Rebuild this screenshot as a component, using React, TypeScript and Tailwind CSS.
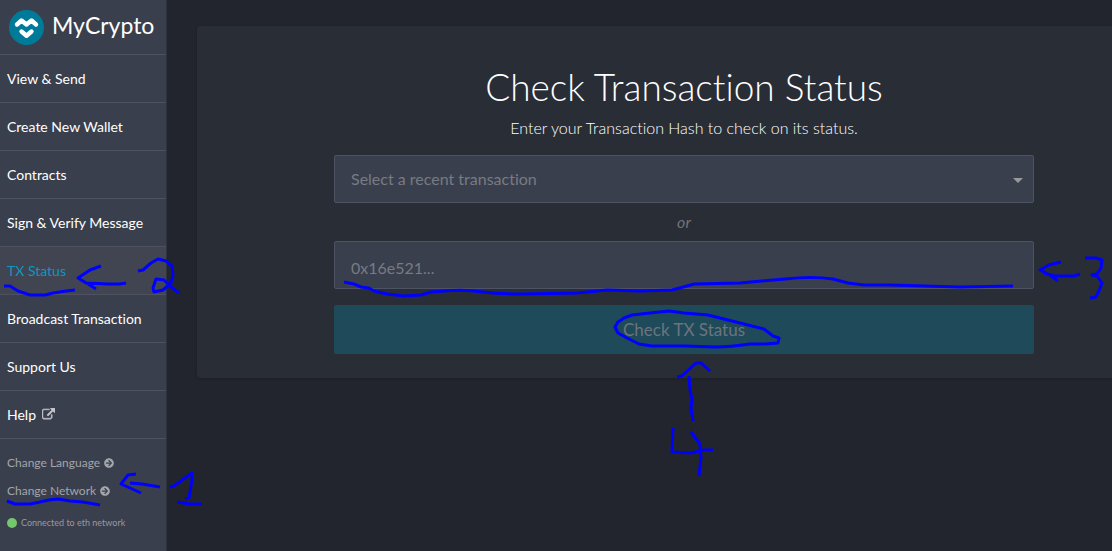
import { FaArrowCircleRight } from "react-icons/fa";

const links = [
  "View & Send",
  "Create New Wallet",
  "Contracts",
  "Sign & Verify Message",
  "TX Status",
  "Broadcast Transaction",
  "Support Us",
  "Help",
];

function Logo() {
  return (
    <svg viewBox="0 0 35 35" className="size-[35px] shrink-0" aria-hidden="true">
      <circle cx="17.5" cy="17.5" r="17.5" fill="#007a99" />
      <g fill="none" stroke="#fff" strokeLinecap="round" strokeLinejoin="round" strokeWidth="4.400">
        <path d="M8 14.500 L12.500 10.500 L17.500 14.500 L22.500 10.500 L27 14.500" />
        <path d="M12.500 21.500 L17.500 25.700 L22.500 21.500" />
      </g>
    </svg>
  );
}

function ExternalIcon() {
  return (
    <svg
      viewBox="0 0 1792 1792"
      className="size-[13px] text-[#c4c6ca]"
      fill="currentColor"
      stroke="currentColor"
      strokeWidth="70"
      aria-hidden="true"
    >
      <path d="M1408 928v320q0 119-84.500 203.500T1120 1536H288q-119 0-203.500-84.500T0 1248V416q0-119 84.500-203.500T288 128h704q14 0 23 9t9 23v64q0 14-9 23t-23 9H288q-66 0-113 47t-47 113v832q0 66 47 113t113 47h832q66 0 113-47t47-113V928q0-14 9-23t23-9h64q14 0 23 9t9 23zm384-864v512q0 26-19 45t-45 19-45-19l-176-176-652 652q-10 10-23 10t-23-10L695 983q-10-10-10-23t10-23l652-652-176-176q-19-19-19-45t19-45 45-19h512q26 0 45 19t19 45z" />
    </svg>
  );
}

function Sidebar() {
  return (
    <aside className="flex w-[167px] shrink-0 flex-col border-r border-[#2f333e] bg-[#3a3f4d]">
      <a href="#home" className="flex h-[55px] items-center gap-2 border-b border-[#4e5260] pl-[9px] text-[23px] leading-none text-white">
        <Logo />
        <span className="pb-1">MyCrypto</span>
      </a>
      <nav>
        {links.map((label) => (
          <a
            key={label}
            href={"#" + label}
            aria-current={label === "TX Status" ? "page" : undefined}
            className="flex h-12 items-center gap-[6px] border-b border-[#4e5260] pl-[7px] text-[14px] text-white aria-[current=page]:bg-[#414552] aria-[current=page]:text-[#0e97c0]"
          >
            {label}
            {label === "Help" && <ExternalIcon />}
          </a>
        ))}
      </nav>
      <div className="flex flex-col items-start pt-[10px] pl-[7px] text-[12px] text-[#a3a5ab]">
        {["Change Language", "Change Network"].map((label) => (
          <button key={label} type="button" className="flex h-7 items-center gap-1">
            {label}
            <FaArrowCircleRight className="size-[10px]" />
          </button>
        ))}
        <p className="flex h-9 items-center gap-1 text-[9px] text-[#989aa1]">
          <span className="size-[10px] rounded-full bg-[#75c76d]" />
          Connected to eth network
        </p>
      </div>
    </aside>
  );
}

function Annotations() {
  return (
    <svg
      viewBox="0 0 1112 551"
      className="pointer-events-none absolute top-0 left-0 h-[551px] w-[1112px]"
      fill="none"
      stroke="#0000fe"
      strokeWidth="3"
      strokeLinejoin="round"
      aria-hidden="true"
    >
      <path d="M4 286 L10 286 L18 291 L30 295 L45 295 L53 293 L66 291 L75 290" />
      <path d="M101 266 L90 270 L78 278 L88 284 L96 289 M78 278 L86 283 L108 284 L120 284 L126 283" />
      <path d="M138 271 L143 270 L151 263 L158 259 L166 261 L172 266 L173 275 L171 283 L163 290 L154 292 L153 288 L156 279 L164 280 L171 287 L179 293" />
      <path d="M7 501 L15 504 L30 504 L40 502 L49 500 L58 499 L70 501 L83 502 L100 505" />
      <path d="M136 474 L128 475 L121 484 L130 488 L141 493 M130 483 L142 484 L160 487" />
      <path d="M170 487 L174 486 L182 480 L192 473 L192 480 L189 498 L185 499 M177 502 L190 504 L202 504" />
      <path d="M344 282 L354 284 L361 287 L369 288 L374 291 L387 294 L404 296 L421 295 L431 292 L444 291 Q464 289 483 292 Q500 294 520 294 L577 293 L607 290 L640 291 L672 290 L687 286 L694 284 L740 283 L785 279 Q812 276 833 279 L848 283 L864 285 L890 285 L960 287 L1013 286" />
      <path d="M1061 262 L1049 265 L1040 270 L1050 275 L1058 281 M1044 273 L1054 276 L1074 276 L1080 274" />
      <path d="M1085 258 L1096 258 L1102 260 L1101 268 L1097 274 L1092 275 L1097 276 L1102 283 L1099 291 L1096 297 L1090 298" />
      <path d="M615 327 L618 322 L624 318 L632 315 L650 313 L669 311 L684 313 L708 315 L728 320 L748 325 L764 329 L773 336 L779 338 L778 343 L765 344 L750 344 Q730 347 715 347 L685 346 L652 346 L639 344 L627 338 L618 333 Z" />
      <path d="M677 377 L682 376 L696 363 L701 363 L710 371 M689 376 L690 390 L692 399 L691 408 L693 421" />
      <path d="M673 428 L672 452 L691 453 L704 450 L713 450 M691 432 L700 444 L701 458 L699 476" />
    </svg>
  );
}

export default function App() {
  return (
    <div className="relative flex min-h-screen overflow-hidden bg-[#22252d] font-['Lato',sans-serif] [font-variant-ligatures:none]">
      <Sidebar />
      <main className="min-w-0 flex-1 pt-[26px] pl-[30px]">
        <section className="rounded-l-sm bg-[#292d36] pt-[38px] pr-[78px] pb-6 pl-[137px] shadow-sm">
          <h1 className="text-center text-[37px] leading-[46px] font-light text-white">Check Transaction Status</h1>
          <p className="pt-[6px] text-center text-[16px] leading-6 font-light text-white">
            Enter your Transaction Hash to check on its status.
          </p>
          <form className="flex flex-col pt-[15px] text-[16px]" onSubmit={(e) => e.preventDefault()}>
            <div className="relative">
              <select
                aria-label="Recent transaction"
                className="h-12 w-full appearance-none rounded-xs border border-[#4d5363] bg-[#3a3f4d] px-4 text-[#777b83]"
              >
                <option>Select a recent transaction</option>
              </select>
              <svg viewBox="0 0 10 5" className="pointer-events-none absolute top-[23px] right-[11px] h-[5px] w-[10px]" aria-hidden="true">
                <path d="M0 0h10L5 5z" fill="#999" />
              </svg>
            </div>
            <em className="py-[7px] text-center leading-6 text-[#71747a]">or</em>
            <input
              aria-label="Transaction hash"
              placeholder="0x16e521..."
              className="h-12 rounded-xs border border-[#4d5363] bg-[#3a3f4d] px-4 pt-1 text-white placeholder:text-[#777b83]"
            />
            <button type="submit" className="mt-4 h-[49px] rounded-xs bg-[#1e4a5a] text-[17px] text-[#6c747d]">
              Check TX Status
            </button>
          </form>
        </section>
      </main>
      <Annotations />
    </div>
  );
}
